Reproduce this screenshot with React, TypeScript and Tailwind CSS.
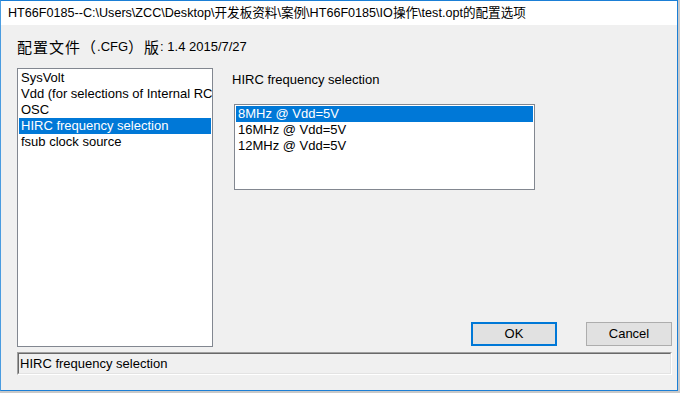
import React from "react";

const latin = { fontFamily: '"Liberation Sans", Arial, sans-serif' };
const cjk = { fontFamily: '"Noto Sans CJK SC", sans-serif' };

export default function App() {
  const leftItems = [
    "SysVolt",
    "Vdd (for selections of Internal RC",
    "OSC",
    "HIRC frequency selection",
    "fsub clock source",
  ];
  const rightItems = ["8MHz @ Vdd=5V", "16MHz @ Vdd=5V", "12MHz @ Vdd=5V"];
  return (
    <div className="w-[680px] h-[393px] bg-[#c9c9c9] overflow-hidden">
      <div className="w-[678px] h-[391px] border border-[#1b7fd6] border-l-[#4a9ce0] flex flex-col bg-[#f0f0f0]">
        <div
          className="h-[24px] bg-white flex items-center pl-[7px] text-[12.6px] text-black whitespace-nowrap"
          style={{ fontFamily: '"Liberation Sans", "Noto Sans CJK SC", sans-serif' }}
        >
          HT66F0185--C:\Users\ZCC\Desktop\开发板资料\案例\HT66F0185\IO操作\test.opt的配置选项
        </div>
        <div className="flex-1 flex flex-col pl-[16px] pr-[5px]">
          <div className="mt-[12px] h-[20px] flex items-center whitespace-nowrap text-black">
            <span className="text-[15px] tracking-[1px]" style={cjk}>
              配置文件（
            </span>
            <span className="text-[13px]" style={latin}>.CFG</span>
            <span className="text-[15px] tracking-[1px]" style={cjk}>
              ）版
            </span>
            <span className="text-[13px]" style={latin}>: 1.4 2015/7/27</span>
          </div>
          <div className="mt-[11px] flex h-[279px]">
            <div className="w-[196px] h-[279px] border border-[#828790] bg-white p-[1px] overflow-hidden">
              {leftItems.map((t, i) => (
                <div
                  key={t}
                  className={
                    "h-[16px] leading-[16px] pl-[2px] text-[13px] whitespace-nowrap " +
                    (i === 3 ? "bg-[#0078d7] text-white" : "text-black")
                  }
                  style={latin}
                >
                  {t}
                </div>
              ))}
            </div>
            <div className="flex-1 flex flex-col pl-[19px]">
              <div className="mt-[4px] h-[16px] leading-[16px] text-[13px] text-black whitespace-nowrap" style={latin}>
                HIRC frequency selection
              </div>
              <div className="mt-[16px] ml-[2px] w-[301px] h-[86px] border border-[#828790] bg-white p-[1px]">
                {rightItems.map((t, i) => (
                  <div
                    key={t}
                    className={
                      "h-[16px] leading-[16px] pl-[2px] text-[13px] whitespace-nowrap " +
                      (i === 0 ? "bg-[#0078d7] text-white" : "text-black")
                    }
                    style={latin}
                  >
                    {t}
                  </div>
                ))}
              </div>
              <div className="mt-auto mb-[1px] flex justify-end gap-[29px]">
                <div
                  className="w-[86px] h-[24px] border-2 border-[#0078d7] bg-[#e1e1e1] flex items-center justify-center text-[13px] text-black"
                  style={latin}
                >
                  OK
                </div>
                <div
                  className="w-[86px] h-[24px] border border-[#adadad] bg-[#e1e1e1] flex items-center justify-center text-[13px] text-black"
                  style={latin}
                >
                  Cancel
                </div>
              </div>
            </div>
          </div>
          <div className="mt-[5px] w-[655px] h-[23px] border-t border-l border-t-[#a0a0a0] border-l-[#a0a0a0] border-b border-r border-b-white border-r-white">
            <div className="w-full h-full border-t border-l border-t-[#696969] border-l-[#696969] border-b border-r border-b-[#e3e3e3] border-r-[#e3e3e3] flex items-center pl-[1px]">
              <span className="text-[13px] text-black whitespace-nowrap" style={latin}>
                HIRC frequency selection
              </span>
            </div>
          </div>
        </div>
      </div>
    </div>
  );
}
